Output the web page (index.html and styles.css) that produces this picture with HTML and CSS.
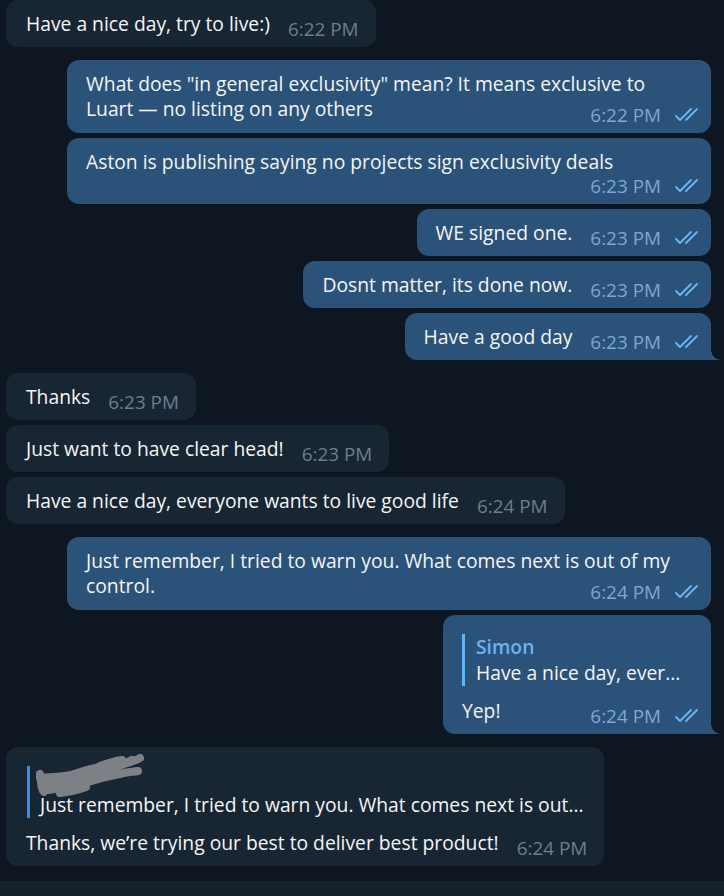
FILE: index.html
```html
<!DOCTYPE html>
<html lang="en">
<head>
  <meta charset="UTF-8" />
  <meta name="viewport" content="width=device-width, initial-scale=1.0"/>
  <title>Chat</title>
  <link rel="stylesheet" href="styles.css">
</head>
<body>

  <main class="chat">

    <div class="row in">
      <div class="bubble line">
        <span class="text">Have a nice day, try to live:)</span>
        <span class="meta"><span class="time">6:22 PM</span></span>
      </div>
    </div>

    <div class="row out group">
      <div class="bubble wide">
        <div class="text">What does "in general exclusivity" mean? It means exclusive to Luart — no listing on any others<span class="meta float"><span class="time">6:22 PM</span><svg class="checks" viewBox="0 0 26 14"><path d="M2 8l4 4 11-11M12 12l11-11"/></svg></span></div>
      </div>
    </div>

    <div class="row out">
      <div class="bubble wide">
        <div class="text">Aston is publishing saying no projects sign exclusivity deals</div>
        <div class="meta below"><span class="time">6:23 PM</span><svg class="checks" viewBox="0 0 26 14"><path d="M2 8l4 4 11-11M12 12l11-11"/></svg></div>
      </div>
    </div>

    <div class="row out">
      <div class="bubble line">
        <span class="text">WE signed one.</span>
        <span class="meta"><span class="time">6:23 PM</span><svg class="checks" viewBox="0 0 26 14"><path d="M2 8l4 4 11-11M12 12l11-11"/></svg></span>
      </div>
    </div>

    <div class="row out">
      <div class="bubble line">
        <span class="text">Dosnt matter, its done now.</span>
        <span class="meta"><span class="time">6:23 PM</span><svg class="checks" viewBox="0 0 26 14"><path d="M2 8l4 4 11-11M12 12l11-11"/></svg></span>
      </div>
    </div>

    <div class="row out">
      <div class="bubble line tail">
        <span class="text">Have a good day</span>
        <span class="meta"><span class="time">6:23 PM</span><svg class="checks" viewBox="0 0 26 14"><path d="M2 8l4 4 11-11M12 12l11-11"/></svg></span>
      </div>
    </div>

    <div class="row in group">
      <div class="bubble line">
        <span class="text">Thanks</span>
        <span class="meta"><span class="time">6:23 PM</span></span>
      </div>
    </div>

    <div class="row in">
      <div class="bubble line">
        <span class="text">Just want to have clear head!</span>
        <span class="meta"><span class="time">6:23 PM</span></span>
      </div>
    </div>

    <div class="row in">
      <div class="bubble line">
        <span class="text">Have a nice day, everyone wants to live good life</span>
        <span class="meta"><span class="time">6:24 PM</span></span>
      </div>
    </div>

    <div class="row out group">
      <div class="bubble wide">
        <div class="text">Just remember, I tried to warn you. What comes next is out of my control.<span class="meta float"><span class="time">6:24 PM</span><svg class="checks" viewBox="0 0 26 14"><path d="M2 8l4 4 11-11M12 12l11-11"/></svg></span></div>
      </div>
    </div>

    <div class="row out">
      <div class="bubble reply short tail">
        <div class="quote">
          <div class="quote-name">Simon</div>
          <div class="quote-text">Have a nice day, ever...</div>
        </div>
        <div class="line">
          <span class="text">Yep!</span>
          <span class="meta"><span class="time">6:24 PM</span><svg class="checks" viewBox="0 0 26 14"><path d="M2 8l4 4 11-11M12 12l11-11"/></svg></span>
        </div>
      </div>
    </div>

    <div class="row in group">
      <div class="bubble reply">
        <div class="quote">
          <div class="quote-name">
            <svg class="scribble" viewBox="0 0 110 44">
              <path d="M6 20c2 8 0 14 4 18"/>
              <path d="M6 24c12-2 22 0 34-4s20-6 30-8"/>
              <path d="M10 30c16-2 30-4 44-8s22-8 36-12 12-4 16-6"/>
              <path d="M14 36c14-2 28-4 40-8s20-6 32-8"/>
              <path d="M26 39c10-1 18-3 26-6"/>
              <path d="M66 12c8-3 14-5 22-6M80 14l18-8M86 20c6-2 12-2 18-3"/>
            </svg>
          </div>
          <div class="quote-text">Just remember, I tried to warn you. What comes next is out...</div>
        </div>
        <div class="line">
          <span class="text">Thanks, we’re trying our best to deliver best product!</span>
          <span class="meta"><span class="time">6:24 PM</span></span>
        </div>
      </div>
    </div>

  </main>

  <footer class="composer"></footer>

</body>
</html>
```

FILE: styles.css
```css
html, body {
  height: 100%;
}

body {
  margin: 0;
  display: flex;
  flex-direction: column;
  background: #0e1621;
  color: #f5f5f5;
  font-family: 'Open Sans', 'Noto Sans', sans-serif;
  font-size: 19.3px;
  line-height: 25px;
  overflow: hidden;
}

.chat {
  flex: 1;
  display: flex;
  flex-direction: column;
  gap: 5px;
  padding: 0 13px 0 6px;
}

.row {
  display: flex;
}

.row.group {
  margin-top: 8px;
}

.row.out {
  justify-content: flex-end;
}

.bubble {
  position: relative;
  box-sizing: border-box;
  max-width: 644px;
  padding: 11px 17px 8px 20px;
  border-radius: 12px;
  background: #182533;
}

.out .bubble {
  padding: 11px 11px 8px 19px;
  background: #2b5278;
}

.bubble.wide {
  width: 644px;
}

.bubble.short {
  width: 268px;
}

/* long messages wrap a bit before the bubble edge */
.wide .text {
  display: flow-root;
  padding-right: 12px;
}

.line {
  display: flex;
  align-items: flex-start;
  gap: 18px;
}

.meta {
  display: flex;
  align-items: center;
  justify-content: flex-end;
  gap: 13px;
  margin-top: 8px;
  margin-left: auto;
  height: 20px;
  flex-shrink: 0;
}

/* time sits on the last text line when it fits */
.meta.float {
  float: right;
  margin: 9px -12px 0 18px;
}

.meta.below {
  margin-top: 2px;
}

.time {
  font-size: 18.9px;
  line-height: 20px;
  color: #6d7f8f;
  white-space: nowrap;
}

.out .time {
  color: #7da8d3;
}

.checks {
  width: 26px;
  height: 14px;
  fill: none;
  stroke: #6cb6f5;
  stroke-width: 1.8;
  stroke-linecap: round;
  stroke-linejoin: round;
}

/* the little corner on the last bubble of a group */
.tail {
  border-bottom-right-radius: 0;
}

.tail::after {
  content: "";
  position: absolute;
  right: -10px;
  bottom: 0;
  width: 10px;
  height: 10px;
  background: radial-gradient(circle at 100% 0, transparent 9.5px, #2b5278 10px);
}

.row .bubble.reply {
  padding-top: 19px;
}

.quote {
  border-left: 3px solid #5eb5f7;
  padding-left: 11px;
  margin-bottom: 12px;
  line-height: 26px;
}

.in .quote {
  border-left-color: #3f8fd2;
  padding-left: 10px;
  margin-left: 1px;
}

.quote-name {
  display: flow-root;
  height: 26px;
  font-weight: 600;
  color: #6ab3f3;
}

.quote-text {
  white-space: nowrap;
}

.scribble {
  display: block;
  width: 110px;
  height: 44px;
  margin: -12px 0 0 -6px;
  fill: none;
  stroke: #7d8085;
  stroke-width: 8;
  stroke-linecap: round;
  stroke-linejoin: round;
}

.composer {
  height: 15px;
  background: #17212b;
}
```
